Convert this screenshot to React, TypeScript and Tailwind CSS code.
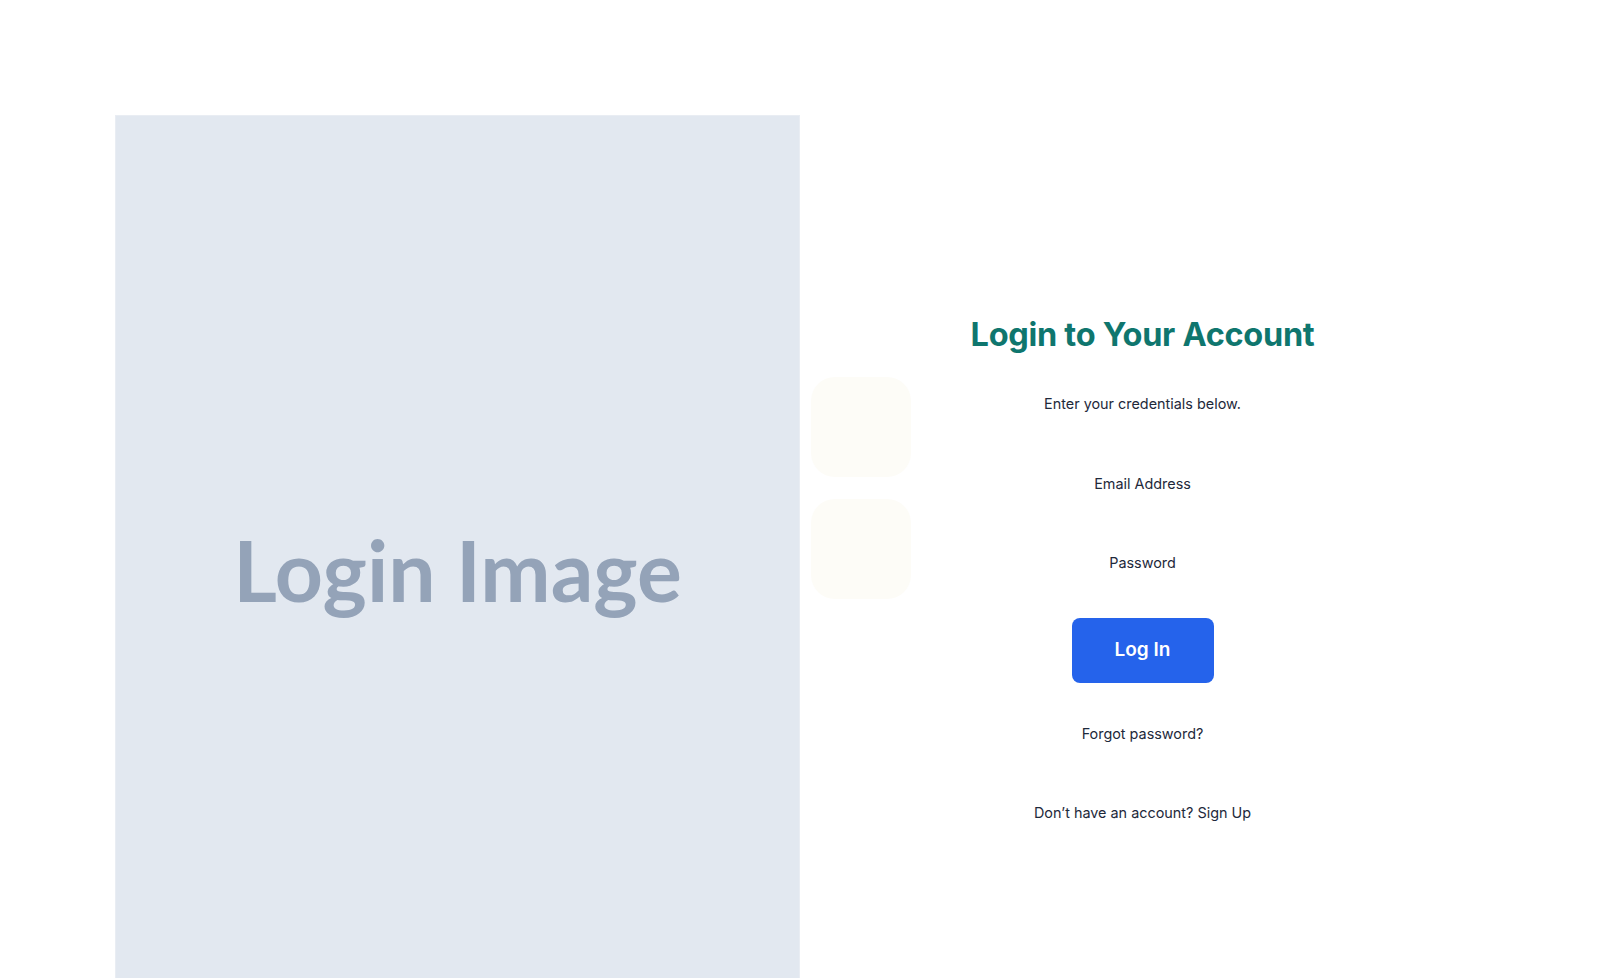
import type { ReactNode } from "react";

function Line({ children, className = "" }: { children: ReactNode; className?: string }) {
  return <p className={`text-[14.4px] leading-5 text-[#1e293b] ${className}`}>{children}</p>;
}

export default function App() {
  return (
    <div className="min-h-screen bg-white font-['Inter',sans-serif]">
      <div className="mx-[115px] mt-[115px] grid h-[912px] grid-cols-2">
        <div className="flex items-center justify-center border border-[#e9edf3] bg-[#e2e8f0] pb-[2px]">
          <span className="font-['Lato',sans-serif] text-[84px] font-bold leading-none text-[#94a3b8]">
            Login Image
          </span>
        </div>

        <div className="relative flex flex-col items-center justify-center pb-[2px]">
          {/* stray input blocks */}
          <div className="absolute left-[11px] top-[262px] flex flex-col gap-[22px]">
            <div className="h-[100px] w-[100px] rounded-3xl bg-[#fdfcf7]" />
            <div className="h-[100px] w-[100px] rounded-3xl bg-[#fdfcf7]" />
          </div>

          <h1 className="text-[32.5px] font-bold leading-9 tracking-[-0.3px] text-[#0f766e]">
            Login to Your Account
          </h1>
          <Line className="mt-[41px]">Enter your credentials below.</Line>
          <Line className="mt-[60px]">Email Address</Line>
          <Line className="mt-[59px]">Password</Line>
          <button className="mt-[45px] h-[65px] w-[142px] rounded-lg bg-[#2563eb] text-[19px] font-semibold text-white">
            Log In
          </button>
          <Line className="mt-[41px]">Forgot password?</Line>
          <Line className="mt-[59px]">Don’t have an account? Sign Up</Line>
        </div>
      </div>
    </div>
  );
}
